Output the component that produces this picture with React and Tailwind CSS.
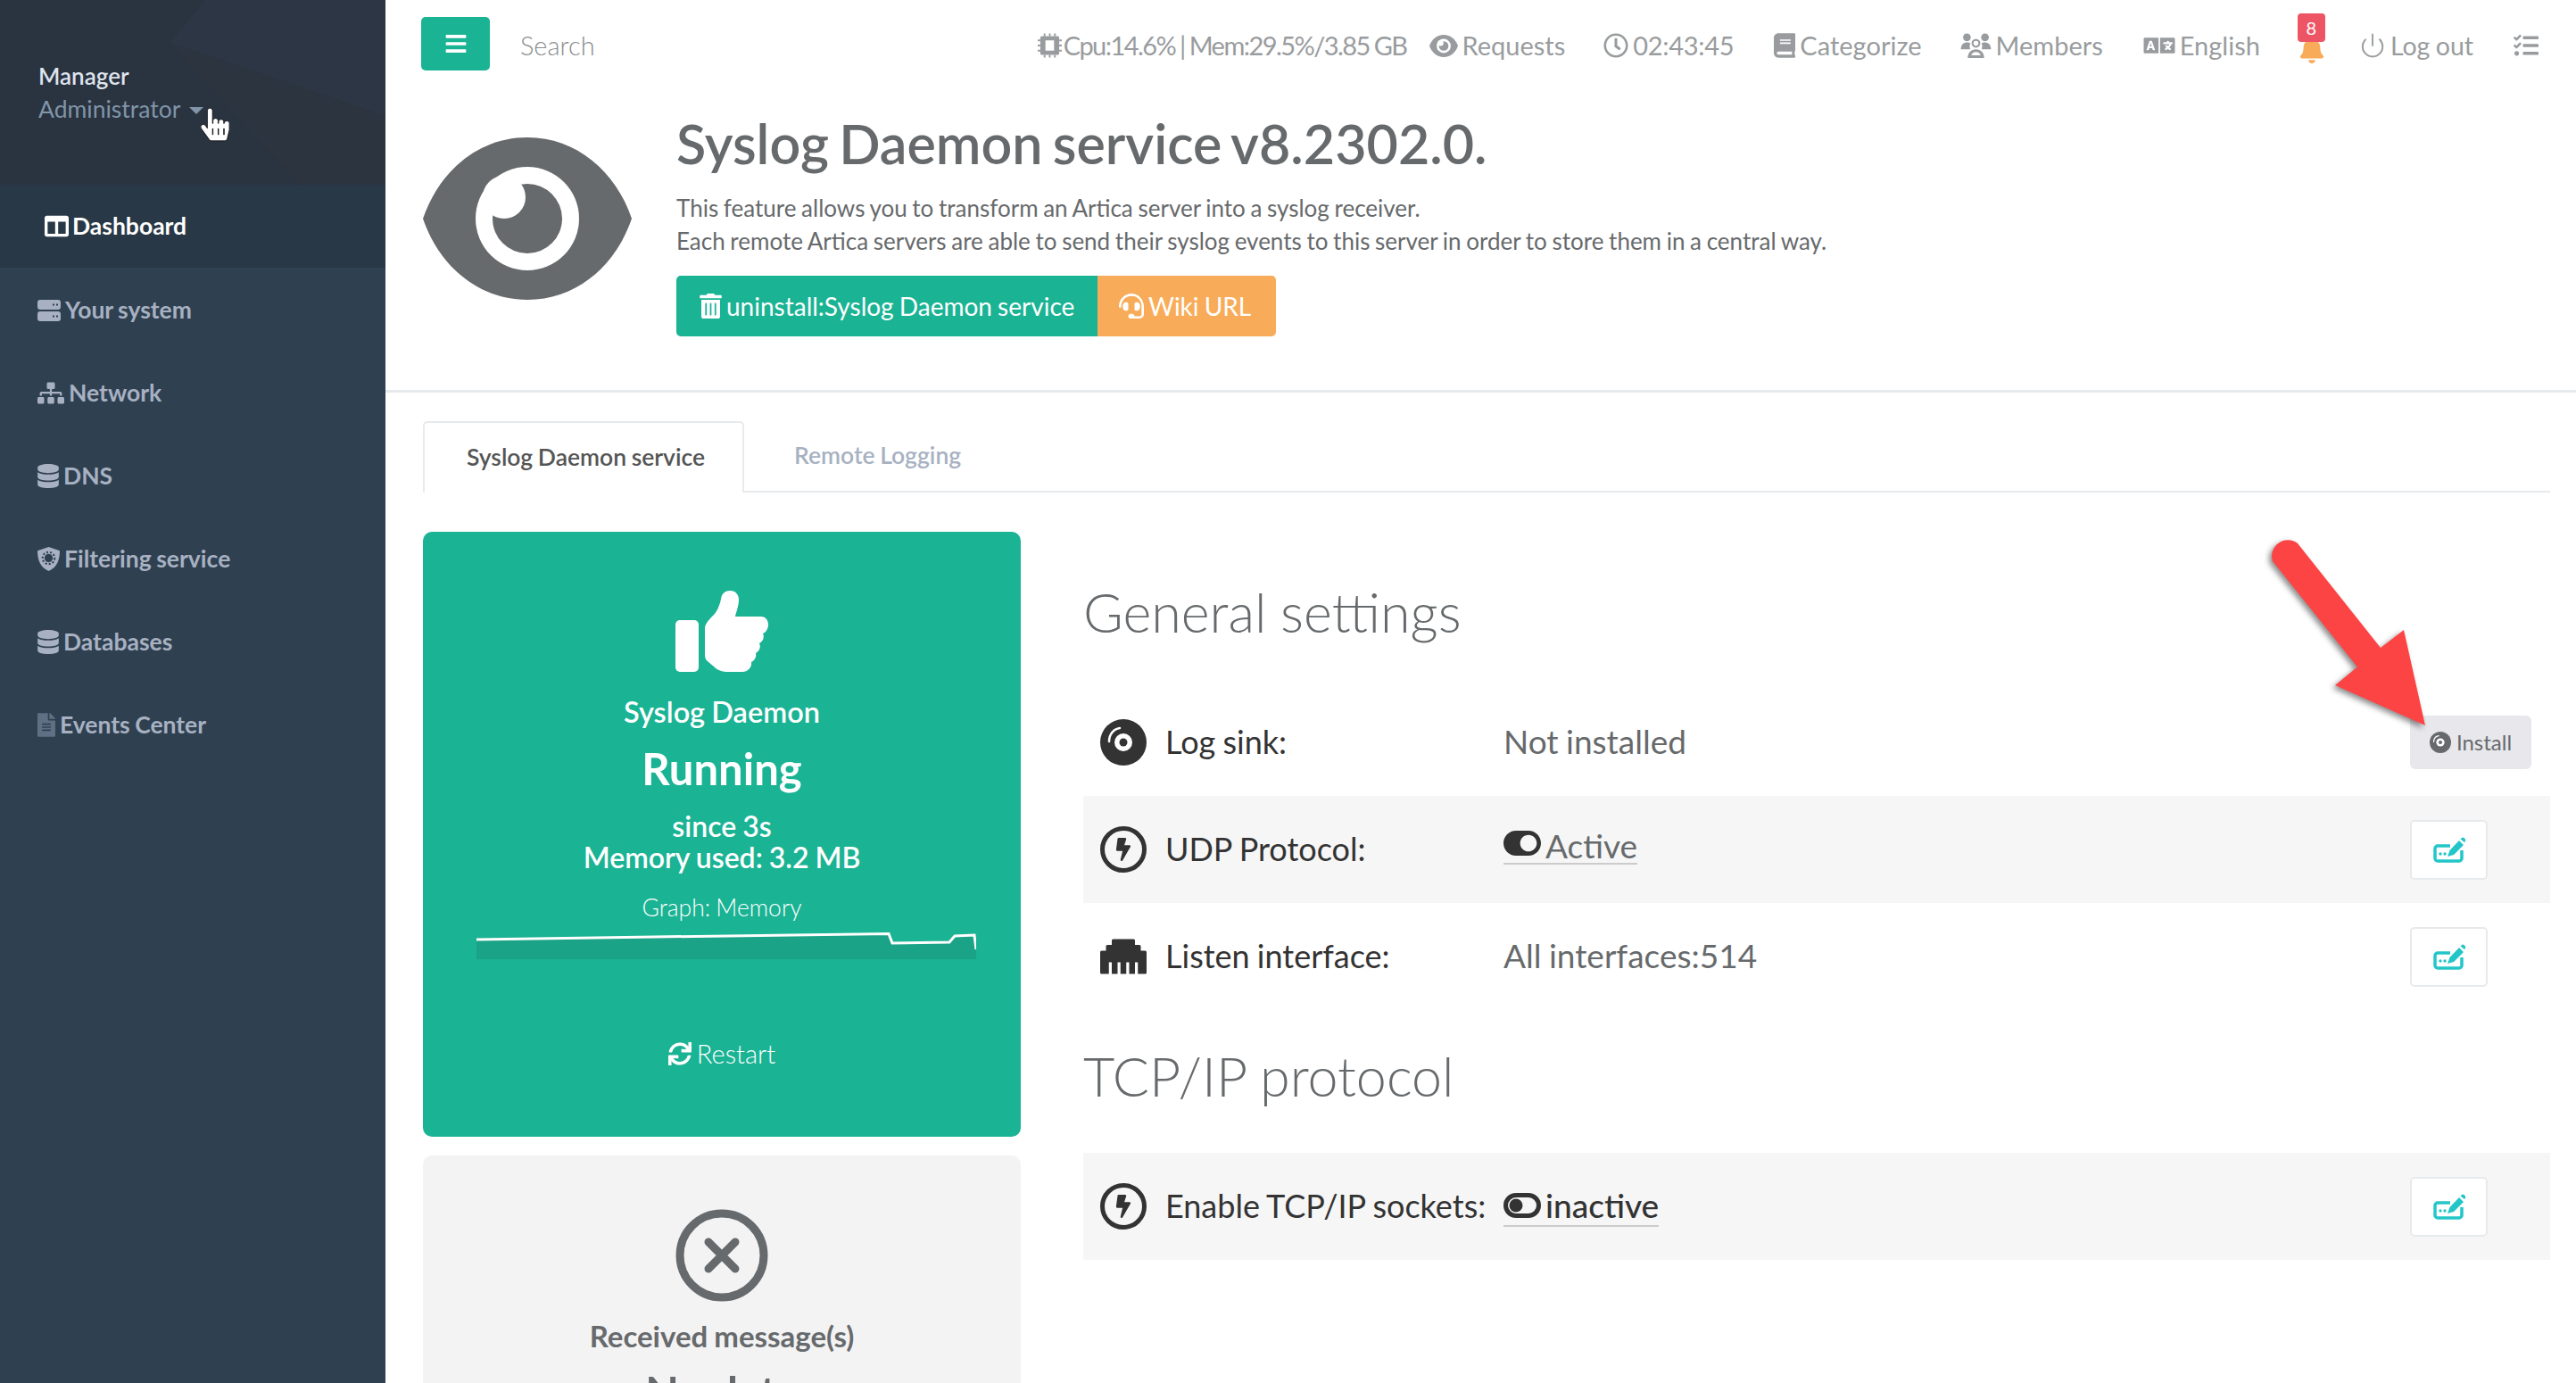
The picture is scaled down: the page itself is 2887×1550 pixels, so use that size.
import React from 'react';
import {
  FaBars, FaBell, FaBook, FaBolt, FaColumns, FaDatabase, FaEthernet, FaFileAlt, FaHandPointer,
  FaHeadset, FaLanguage, FaRegClock, FaSitemap, FaSync, FaTasks, FaToggleOn, FaTrashAlt,
} from 'react-icons/fa';
import { Power } from 'lucide-react';

function EyeIcon({ className, holeClass = 'fill-white' }) {
  return (
    <svg viewBox="0 0 234 182" className={className} fill="currentColor">
      <path d="M0 91C18 38 62 0 117 0s99 38 117 91c-18 53-62 91-117 91S18 144 0 91Z" />
      <circle cx="117" cy="91" r="58" className={holeClass} />
      <circle cx="117" cy="91" r="39" />
      <circle cx="91" cy="67" r="24" className={holeClass} />
    </svg>
  );
}

function DiscIcon({ className }) {
  return (
    <svg viewBox="0 0 52 52" className={className} fill="none">
      <circle cx="26" cy="26" r="26" fill="currentColor" />
      <circle cx="26" cy="26" r="10" fill="white" />
      <circle cx="26" cy="26" r="4.5" fill="currentColor" />
      <path d="M10 25C10 17 15 11 22 10" stroke="white" strokeWidth="2.5" strokeLinecap="round" />
    </svg>
  );
}

function BoltCircle({ className }) {
  return (
    <span className={`relative flex items-center justify-center rounded-full border-[5px] border-[#333333] ${className}`}>
      <FaBolt className="w-[20px] h-[26px] text-[#333333]" />
    </span>
  );
}

function EditIcon() {
  return (
    <svg viewBox="0 0 36 29" className="w-[36px] h-[29px]" fill="none">
      <path d="M19 10H5a3 3 0 0 0-3 3v11a3 3 0 0 0 3 3h24a3 3 0 0 0 3-3v-9" stroke="#23c6c8" strokeWidth="3.5" />
      <circle cx="8" cy="19" r="1.7" fill="#23c6c8" />
      <circle cx="13" cy="19" r="1.7" fill="#23c6c8" />
      <path d="M16 22l2.500-7L29 4l5 5-11 11-7 2ZM30.500 2.500L32 1a2 2 0 0 1 2.500 0L36 2.500a2 2 0 0 1 0 2.500L35 6l-4.500-3.500Z" fill="#23c6c8" />
    </svg>
  );
}

function MembersIcon({ className }) {
  return (
    <svg viewBox="0 0 35 29" className={className} fill="currentColor">
      <circle cx="7" cy="5" r="4.5" />
      <circle cx="28" cy="5" r="4.5" />
      <path d="M0 19c0-5 3-8 7-8 2 0 3 .5 4 1-1 2-1 5 0 7H0ZM35 19c0-5-3-8-7-8-2 0-3 .5-4 1 1 2 1 5 0 7h11Z" />
      <circle cx="17.5" cy="12" r="4" fill="none" stroke="currentColor" strokeWidth="2.2" />
      <path d="M8 29c0-6 4-10 9.500-10S27 23 27 29H8Z" />
      <path d="M12 26h11c-.6-2.500-3-4-5.500-4S12.600 23.500 12 26Z" fill="white" />
    </svg>
  );
}

function ShieldIcon({ className }) {
  return (
    <svg viewBox="0 0 24 26" className={className}>
      <path d="M12 0l12 4c0 10-3 18-12 22C3 22 0 14 0 4l12-4Z" fill="#a7b1c2" />
      <circle cx="12" cy="12" r="4.500" fill="#2f4050" />
      <circle cx="12" cy="12" r="6.500" fill="none" stroke="#2f4050" strokeWidth="2" strokeDasharray="2 2" />
    </svg>
  );
}

function ServerIcon({ className }) {
  return (
    <svg viewBox="0 0 26 24" className={className} fill="currentColor">
      <path fillRule="evenodd" d="M3 0h20a3 3 0 0 1 3 3v5a3 3 0 0 1-3 3H3a3 3 0 0 1-3-3V3a3 3 0 0 1 3-3Zm14 4.500v2h2v-2h-2Zm4 0v2h2v-2h-2ZM3 13h20a3 3 0 0 1 3 3v5a3 3 0 0 1-3 3H3a3 3 0 0 1-3-3v-5a3 3 0 0 1 3-3Zm14 4.500v2h2v-2h-2Zm4 0v2h2v-2h-2Z" />
    </svg>
  );
}

function ChipIcon({ className }) {
  return (
    <svg viewBox="0 0 28 28" className={className} fill="currentColor">
      <path fillRule="evenodd" d="M5 3h18a2 2 0 0 1 2 2v18a2 2 0 0 1-2 2H5a2 2 0 0 1-2-2V5a2 2 0 0 1 2-2Zm4 5v12h10V8H9Z" />
      <path d="M7 0h2v3H7zM13 0h2v3h-2zM19 0h2v3h-2zM7 25h2v3H7zM13 25h2v3h-2zM19 25h2v3h-2zM0 7h3v2H0zM0 13h3v2H0zM0 19h3v2H0zM25 7h3v2h-3zM25 13h3v2h-3zM25 19h3v2h-3z" />
    </svg>
  );
}

function ThumbIcon({ className }) {
  return (
    <svg viewBox="0 0 104 91" className={className} fill="currentColor">
      <rect x="0" y="33" width="26" height="58" rx="5" />
      <path d="M33 42c0-4 4-9 8-13 5-4 9-13 10-20 1-6 5-9 10-9 7 0 10 5 10 10 0 7-3 14-4 19h29c5 0 8 4 8 9s-3 9-6 10c2 4 0 9-4 11 2 4 0 9-4 11 1 4-1 8-5 10 1 6-4 11-10 11H60c-8 0-13-2-17-6l-6-5c-3-2-4-5-4-8V42Z" />
    </svg>
  );
}

function ToggleOffIcon({ className }) {
  return (
    <svg viewBox="0 0 42 28" className={className}>
      <rect x="2.500" y="2.500" width="37" height="23" rx="11.500" fill="none" stroke="currentColor" strokeWidth="5" />
      <circle cx="14" cy="14" r="7.500" fill="currentColor" />
    </svg>
  );
}

function TopItem({ icon, children, className = '', textClass = '' }) {
  return (
    <div className={`flex items-center gap-[5px] text-[29px] leading-[40px] text-[#999c9e] whitespace-nowrap ${className}`}>
      {icon}
      {children && <span className={textClass}>{children}</span>}
    </div>
  );
}

function NavItem({ icon, label }) {
  return (
    <div className="h-[93px] pl-[42px] pt-[2px] flex items-center gap-[5px] text-[26.5px] font-bold text-[#a7b1c2]">
      {icon}
      <span>{label}</span>
    </div>
  );
}

function Sidebar() {
  return (
    <aside className="w-[432px] shrink-0 bg-[#2f4050]">
      <div className="relative h-[207px] bg-[#2a3340] overflow-hidden pl-[43px] pt-[66px]">
        <svg className="absolute inset-0 w-full h-full" viewBox="0 0 432 207" preserveAspectRatio="none">
          <polygon points="190,48 230,0 432,0 432,130" fill="#2d3644" />
          <polygon points="190,48 335,207 432,207 432,130" fill="#2b343f" />
        </svg>
        <div className="relative text-[26px] leading-[38px] font-semibold text-[#dfe4ed]">Manager</div>
        <div className="relative flex items-center text-[26.5px] leading-[36px] text-[#8095a8]">
          Administrator
          <span className="ml-[10px] mt-[3px] w-0 h-0 border-x-[8px] border-x-transparent border-t-[8px] border-t-[#8095a8]" />
        </div>
        {/* mouse pointer over the menu */}
        <FaHandPointer className="absolute left-[225px] top-[116px] w-[32px] h-[47px] text-white [&_path]:stroke-black [&_path]:stroke-[10px]" />
      </div>
      <div className="h-[93px] pl-[50px] bg-[#293846] flex items-center gap-[4px] text-[26.5px] font-bold text-white">
        <FaColumns className="w-[27px] h-[27px]" />
        <span>Dashboard</span>
      </div>
      <NavItem icon={<ServerIcon className="w-[26px] h-[24px]" />} label="Your system" />
      <NavItem icon={<FaSitemap className="w-[30px] h-[27px]" />} label="Network" />
      <NavItem icon={<FaDatabase className="w-[24px] h-[27px]" />} label="DNS" />
      <NavItem icon={<ShieldIcon className="w-[25px] h-[27px]" />} label="Filtering service" />
      <NavItem icon={<FaDatabase className="w-[24px] h-[27px]" />} label="Databases" />
      <NavItem icon={<FaFileAlt className="w-[20px] h-[27px] text-[#5f7084]" />} label="Events Center" />
    </aside>
  );
}

function TopBar() {
  return (
    <header className="h-[102px] pl-[40px] pr-[42px] flex items-center">
      <div className="self-start mt-[19px] w-[77px] h-[60px] rounded-[5px] bg-[#1ab394] flex items-center justify-center">
        <FaBars className="w-[24px] h-[26px] text-white" />
      </div>
      <div className="ml-[34px] text-[29px] font-light text-[#8a8d8f]">Search</div>
      <div className="ml-auto flex items-center">
        <TopItem textClass="tracking-[-1.550px] -ml-[3px]" icon={<ChipIcon className="w-[27px] h-[28px]" />}>Cpu:14.6% | Mem:29.5%/3.85 GB</TopItem>
        <TopItem className="ml-[25px]" icon={<EyeIcon className="w-[32px] h-[25px]" />}>Requests</TopItem>
        <TopItem className="ml-[43px]" textClass="tracking-[-0.300px]" icon={<FaRegClock className="w-[28px] h-[28px]" />}>02:43:45</TopItem>
        <TopItem className="ml-[45px]" icon={<FaBook className="w-[24px] h-[28px]" />}>Categorize</TopItem>
        <TopItem className="ml-[43px]" icon={<MembersIcon className="w-[35px] h-[28px]" />}>Members</TopItem>
        <TopItem className="ml-[45px]" icon={<FaLanguage className="w-[36px] h-[28px]" />}>English</TopItem>
        <div className="relative ml-[42px] w-[32px] h-[40px] flex items-end justify-center">
          <FaBell className="w-[30px] h-[30px] text-[#f8ac59]" />
          <span className="absolute -top-[16px] left-0 w-[31px] h-[32px] rounded-[4px] bg-[#ed5565] text-white text-[20px] leading-[32px] text-center">8</span>
        </div>
        <TopItem className="ml-[37px]" textClass="text-[28.500px]" icon={<Power className="w-[30px] h-[30px]" strokeWidth={1.5} />}>Log out</TopItem>
        <TopItem className="ml-[45px]" icon={<FaTasks className="w-[28px] h-[28px]" />} />
      </div>
    </header>
  );
}

function Hero() {
  return (
    <section className="h-[338px] pl-[42px] pt-[26px] flex border-b-[3px] border-[#e7eaec]">
      <EyeIcon className="w-[234px] h-[182px] mt-[26px] text-[#676a6c]" />
      <div className="ml-[50px]">
        <h1 className="text-[61px] leading-[66px] font-semibold text-[#676a6c] [word-spacing:-4px]">Syslog Daemon service v8.2302.0.</h1>
        <p className="mt-[21px] text-[26px] leading-[37px] text-[#676a6c]">
          This feature allows you to transform an Artica server into a syslog receiver.
          <br />
          Each remote Artica servers are able to send their syslog events to this server in order to store them in a central way.
        </p>
        <div className="mt-[20px] flex h-[68px] text-[28px] text-white">
          <div className="w-[472px] rounded-l-[5px] bg-[#1ab394] flex items-center pl-[26px] gap-[5px]">
            <FaTrashAlt className="w-[25px] h-[28px]" />
            <span>uninstall:Syslog Daemon service</span>
          </div>
          <div className="w-[200px] rounded-r-[5px] bg-[#f8ac59] flex items-center pl-[24px] gap-[5px]">
            <FaHeadset className="w-[28px] h-[28px]" />
            <span>Wiki URL</span>
          </div>
        </div>
      </div>
    </section>
  );
}

function Tabs() {
  return (
    <div className="mt-[32px] ml-[42px] mr-[29px] h-[80px] flex border-b-2 border-[#e7eaec]">
      <div className="w-[360px] h-[80px] pl-[5px] border-2 border-b-0 border-[#e7eaec] rounded-t-[5px] bg-white flex items-center justify-center text-[26.5px] font-semibold text-[#555555]">
        Syslog Daemon service
      </div>
      <div className="ml-[56px] h-[78px] flex items-center text-[26.5px] font-semibold text-[#a7b1c2]">Remote Logging</div>
    </div>
  );
}

function StatusCards() {
  const graphLine = '0,10 200,7 462,3.5 466,14 530,13 536,6 558,5 560,21';
  return (
    <div className="w-[670px] shrink-0">
      <div className="h-[678px] rounded-[10px] bg-[#1ab394] text-white flex flex-col items-center pt-[66px]">
        <ThumbIcon className="w-[104px] h-[91px]" />
        <div className="mt-[23px] text-[32.500px] leading-[44px] font-semibold">Syslog Daemon</div>
        <div className="mt-[11px] text-[49px] leading-[60px] font-bold">Running</div>
        <div className="mt-[17px] text-[32px] leading-[35px] font-semibold text-center">
          since 3s
          <br />
          Memory used: 3.2 MB
        </div>
        <div className="mt-[21px] text-[26.500px] leading-[36px] font-light">Graph: Memory</div>
        <svg viewBox="0 0 560 32" className="mt-[8px] ml-[10px] w-[560px] h-[32px]">
          <polygon points={`${graphLine} 560,32 0,32`} fill="#1aa386" />
          <polyline points={graphLine} fill="none" stroke="white" strokeWidth="3" />
        </svg>
        <div className="mt-[88px] flex items-center gap-[6px] text-[29px] leading-[36px] font-light">
          <FaSync className="w-[26px] h-[26px]" />
          <span>Restart</span>
        </div>
      </div>
      <div className="mt-[21px] h-[400px] rounded-[10px] bg-[#f3f3f4] text-[#676a6c] flex flex-col items-center pt-[60px]">
        <svg viewBox="0 0 104 104" className="w-[104px] h-[104px]" fill="none" stroke="currentColor">
          <circle cx="52" cy="52" r="47" strokeWidth="9" />
          <path d="M37 37l30 30M67 37L37 67" strokeWidth="9" strokeLinecap="round" />
        </svg>
        <div className="mt-[16px] text-[33px] leading-[44px] font-bold">Received message(s)</div>
        <div className="mt-[11px] text-[49px] leading-[60px] font-bold">No data</div>
      </div>
    </div>
  );
}

function SettingRow({ icon, label, striped, children, action }) {
  return (
    <div className={`h-[120px] flex items-center pl-[19px] ${striped ? 'bg-[#f6f6f6]' : ''}`}>
      <span className="w-[52px] h-[52px] flex items-center justify-center shrink-0 text-[#333333]">{icon}</span>
      <div className="ml-[21px] w-[379px] shrink-0 pb-[3px] text-[36px] text-[#333333] whitespace-nowrap">{label}</div>
      <div className="pb-[2px] text-[37px] text-[#676a6c] whitespace-nowrap">{children}</div>
      <div className="ml-auto w-[157px] shrink-0">{action}</div>
    </div>
  );
}

function EditButton() {
  return (
    <div className="w-[87px] h-[67px] rounded-[5px] border-2 border-[#e7eaec] bg-white flex items-center justify-center">
      <EditIcon />
    </div>
  );
}

function Settings() {
  return (
    <div className="ml-[70px] flex-1 relative">
      <h2 className="h-[176px] pt-[57px] text-[61px] leading-[66px] font-light text-[#676a6c]">General settings</h2>
      <SettingRow
        icon={<DiscIcon className="w-[52px] h-[52px]" />}
        label="Log sink:"
        action={
          <div className="w-[136px] h-[60px] rounded-[6px] bg-[#e7e7ec] flex items-center justify-center gap-[6px] text-[24px] text-[#676a6c]">
            <DiscIcon className="w-[24px] h-[24px]" />
            <span>Install</span>
          </div>
        }
      >
        Not installed
      </SettingRow>
      <SettingRow icon={<BoltCircle className="w-[52px] h-[52px]" />} label="UDP Protocol:" striped action={<EditButton />}>
        <span className="inline-flex items-center gap-[5px] border-b-2 border-[#cccccc] leading-[44px]">
          <FaToggleOn className="w-[42px] h-[42px] text-[#333333]" />
          <span className="translate-y-[3px]">Active</span>
        </span>
      </SettingRow>
      <SettingRow icon={<FaEthernet className="w-[52px] h-[52px]" />} label="Listen interface:" action={<EditButton />}>
        All interfaces:514
      </SettingRow>
      <h2 className="h-[160px] pt-[41px] text-[61px] leading-[66px] font-light text-[#676a6c]">TCP/IP protocol</h2>
      <SettingRow icon={<BoltCircle className="w-[52px] h-[52px]" />} label="Enable TCP/IP sockets:" striped action={<EditButton />}>
        <span className="inline-flex items-center gap-[5px] border-b-2 border-[#cccccc] leading-[44px] text-[#333333] font-medium">
          <ToggleOffIcon className="w-[42px] h-[28px]" />
          inactive
        </span>
      </SettingRow>

      {/* annotation arrow on the screenshot */}
      <svg className="absolute left-[1321px] top-[0px] w-[200px] h-[240px] overflow-visible [filter:drop-shadow(-3px_3px_3px_rgba(0,0,0,0.45))]" viewBox="0 0 200 240">
        <path d="M40 13L133 130l26-20 24 107-101-45 25-20.500L12 33A18 18 0 0 1 40 13Z" fill="#fd4444" />
      </svg>
    </div>
  );
}

export default function App() {
  return (
    <div className="w-[2887px] h-[1550px] overflow-hidden flex bg-white [font-family:Lato,sans-serif] [word-spacing:-1px]">
      <Sidebar />
      <main className="flex-1 min-w-0">
        <TopBar />
        <Hero />
        <Tabs />
        <div className="mt-[44px] ml-[42px] mr-[29px] flex">
          <StatusCards />
          <Settings />
        </div>
      </main>
    </div>
  );
}
